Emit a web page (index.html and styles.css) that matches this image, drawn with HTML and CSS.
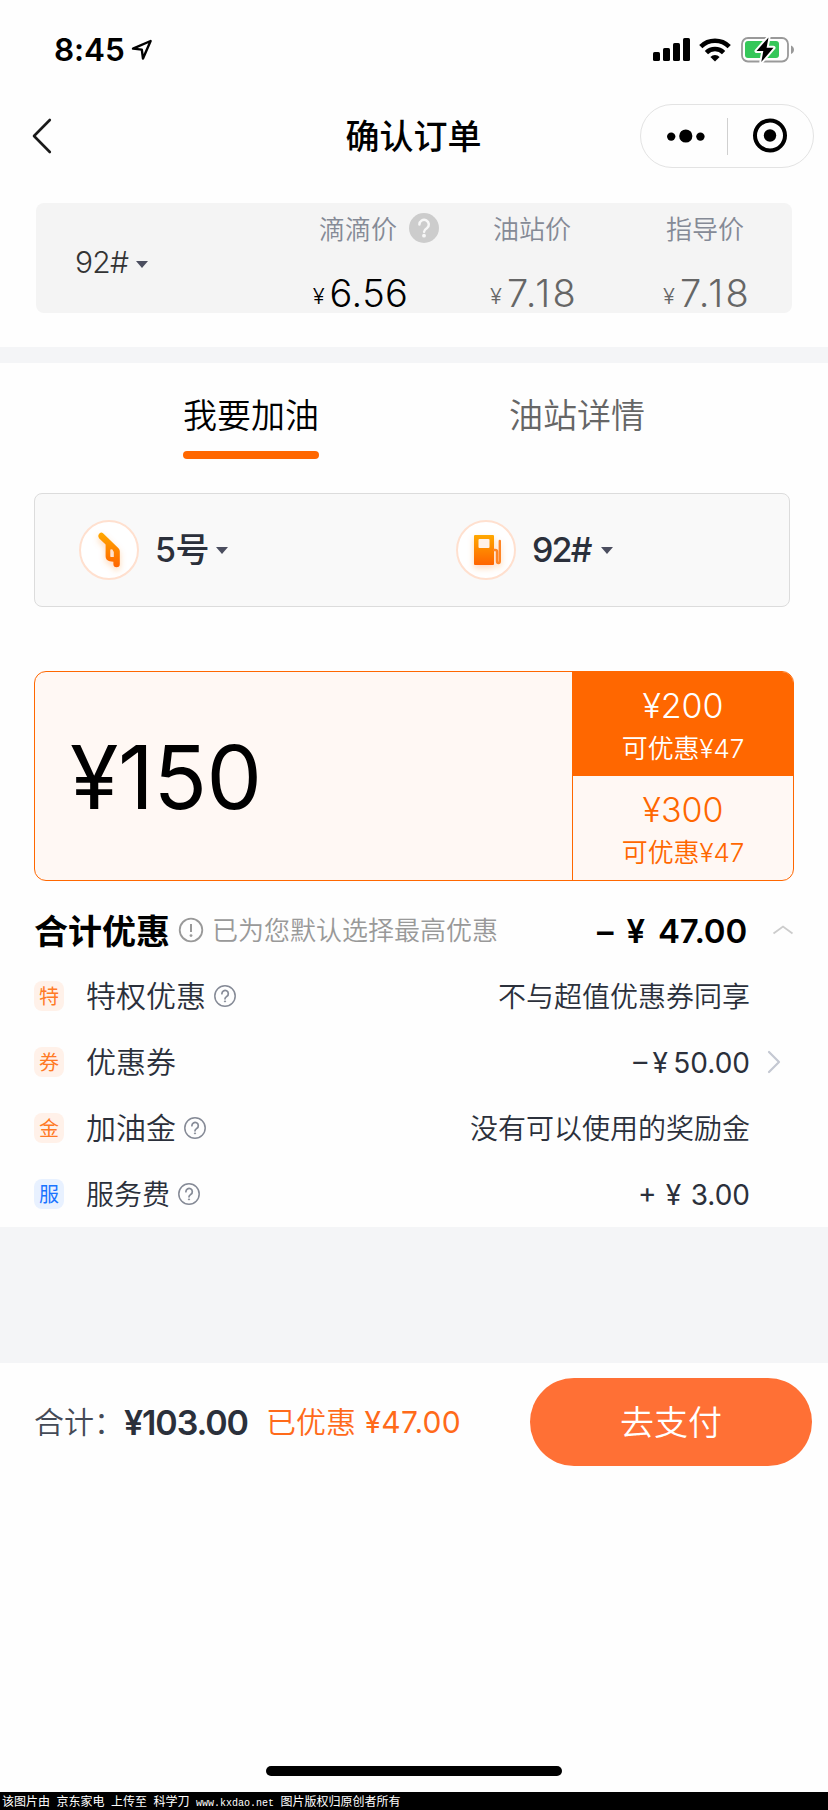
FILE: index.html
```html
<!DOCTYPE html>
<html lang="zh-CN">
<head>
<meta charset="utf-8">
<title>确认订单</title>
<link rel="stylesheet" href="styles.css">
</head>
<body>
<div class="page">
  <header class="status">
    <span class="time">8:45</span>
    <svg class="locate" width="22" height="22" viewBox="0 0 22 22"><path d="M2 9.600 19.600 2 12 19.600 10.800 10.600Z" fill="none" stroke="#000" stroke-width="2.400" stroke-linejoin="round"/></svg>
    <div class="status-icons">
      <svg width="37" height="24" viewBox="0 0 37 24"><rect x="0" y="14" width="7" height="9" rx="1.600"/><rect x="10" y="10" width="7" height="13" rx="1.600"/><rect x="20" y="5" width="7" height="18" rx="1.600"/><rect x="30" y="0" width="7" height="23" rx="1.600"/></svg>
      <svg class="wifi" width="32" height="24" viewBox="0 0 32 24"><g fill="none" stroke="#000" stroke-width="4.600"><path d="M1.800 8.600a20.200 20.200 0 0 1 28.400 0"/><path d="M7.400 14.600a12.200 12.200 0 0 1 17.200 0"/></g><path d="M16 23.600 11.400 19a6.500 6.500 0 0 1 9.200 0Z"/></svg>
      <svg class="battery" width="54" height="28" viewBox="0 0 54 28"><rect x="1" y="2" width="46" height="23.500" rx="6" fill="none" stroke="#999" stroke-width="1.800"/><path d="M50 9.500c4 1.200 4 7.300 0 8.500Z" fill="#999"/><rect x="4" y="5" width="34" height="17" rx="3" fill="#35c759"/><path d="M27.500 1.500 15.500 15h6.800L20.300 26 32.500 11.800h-6.900Z" fill="#000" stroke="#fefefe" stroke-width="4" stroke-linejoin="round" paint-order="stroke"/></svg>
    </div>
  </header>

  <nav class="nav">
    <svg class="back" width="20" height="36" viewBox="0 0 20 36"><path d="M17.800 2 2 18 17.800 34" fill="none" stroke="#1a1a1a" stroke-width="2.600" stroke-linecap="round" stroke-linejoin="round"/></svg>
    <h1 class="title">确认订单</h1>
    <div class="capsule">
      <svg width="38" height="14" viewBox="0 0 38 14"><circle cx="4.200" cy="7.600" r="4.200"/><circle cx="18.800" cy="7" r="6.600"/><circle cx="33.400" cy="7.600" r="4.200"/></svg>
      <span class="capsule-line"></span>
      <svg width="36" height="36" viewBox="0 0 36 36"><circle cx="18" cy="17.500" r="15" fill="none" stroke="#000" stroke-width="4"/><circle cx="18" cy="17.500" r="6.200"/></svg>
    </div>
  </nav>

  <section class="prices">
    <div class="price-card">
      <div class="grade">92#<i class="caret"></i></div>
      <div class="price main">
        <div class="price-label">滴滴价<span class="help-solid"><svg width="30" height="30" viewBox="0 0 30 30"><circle cx="15" cy="15" r="15" fill="#ccc"/><path d="M10.400 11.500a4.700 4.700 0 1 1 7.400 3.800c-1.800 1.200-2.700 1.900-2.700 3.500" fill="none" stroke="#f7f7f7" stroke-width="2.500" stroke-linecap="round"/><circle cx="15" cy="22.700" r="1.900" fill="#f7f7f7"/></svg></span></div>
        <div class="price-value"><small>¥</small>6.56</div>
      </div>
      <div class="price">
        <div class="price-label">油站价</div>
        <div class="price-value"><small>¥</small>7.18</div>
      </div>
      <div class="price">
        <div class="price-label">指导价</div>
        <div class="price-value"><small>¥</small>7.18</div>
      </div>
    </div>
  </section>

  <div class="tabs">
    <div class="tab active">我要加油</div>
    <div class="tab">油站详情</div>
  </div>

  <div class="selector">
    <div class="select">
      <svg class="ring" width="60" height="60" viewBox="0 0 60 60">
        <defs>
          <linearGradient id="flame" x1="0" y1="0" x2="0" y2="1"><stop offset="0" stop-color="#ffa800"/><stop offset="1" stop-color="#ff6400"/></linearGradient>
          <filter id="glow" x="-50%" y="-50%" width="200%" height="200%"><feDropShadow dx="0" dy="3" stdDeviation="3" flood-color="#ff7a20" flood-opacity=".3"/></filter>
        </defs>
        <circle cx="30" cy="30" r="29" fill="#fff" stroke="#ffe0cf" stroke-width="2"/>
        <path d="M19.800 14.200a3.200 3.200 0 0 1 4.500-.8L39.500 28.300q1.300 1.300 1.300 3V44a3.200 3.200 0 0 1-6.400 0v-2.300l-3.800-.4q-4-1-4-5V24.500L20 18.200a3.200 3.200 0 0 1-.2-4ZM31.300 29.600v6.300q0 1.200 1.200 1.200h2.300v-5.200l-1.600-2.600Z" fill="url(#flame)" fill-rule="evenodd" filter="url(#glow)"/>
      </svg>
      <span class="select-text">5号</span><i class="caret"></i>
    </div>
    <div class="select">
      <svg class="ring" width="60" height="60" viewBox="0 0 60 60">
        <circle cx="30" cy="30" r="29" fill="#fff" stroke="#ffe0cf" stroke-width="2"/>
        <g filter="url(#glow)"><path d="M19 15h18q1 0 1 1v28q0 1-1 1H19q-1 0-1-1V16q0-1 1-1Z" fill="url(#flame)"/><path d="M38 30h1.500q1.500 0 1.500 1.500V41q0 2 1.400 2t1.400-2V21" fill="none" stroke="#ff8526" stroke-width="2.400" stroke-linecap="round"/></g>
        <rect x="22.500" y="19" width="11" height="9" rx="1" fill="#fff1e8"/>
      </svg>
      <span class="select-text tight">92#</span><i class="caret"></i>
    </div>
  </div>

  <div class="amount">
    <div class="amount-main">¥150</div>
    <div class="amount-side">
      <div class="choice on"><b>¥200</b><span>可优惠¥47</span></div>
      <div class="choice"><b>¥300</b><span>可优惠¥47</span></div>
    </div>
  </div>

  <div class="total">
    <strong class="total-name">合计优惠</strong>
    <svg class="info" width="26" height="26" viewBox="0 0 26 26"><circle cx="13" cy="13" r="11.300" fill="none" stroke="#999" stroke-width="1.800"/><path d="M13 7v8" stroke="#999" stroke-width="2"/><circle cx="13" cy="18.600" r="1.400" fill="#999"/></svg>
    <span class="total-note">已为您默认选择最高优惠</span>
    <span class="total-value">– ¥ 47.00</span>
    <svg class="up" width="22" height="10" viewBox="0 0 22 10"><path d="M1.500 8.500 11 1.500l9.500 7" fill="none" stroke="#ccc" stroke-width="1.800"/></svg>
  </div>

  <div class="rows">
    <div class="row"><span class="badge">特</span><span class="name">特权优惠</span>
      <svg class="help" width="24" height="24" viewBox="0 0 24 24"><g id="help" fill="none" stroke="#858a96"><circle cx="12" cy="12" r="10.200" stroke-width="1.500"/><path d="M8.900 9.700a3.200 3.200 0 1 1 5 2.600c-1.300.9-1.900 1.300-1.900 2.500" stroke-width="1.700" stroke-linecap="round"/><circle cx="12" cy="17.400" r=".6" fill="#858a96" stroke-width="1"/></g></svg>
      <span class="value">不与超值优惠券同享</span></div>
    <div class="row"><span class="badge">券</span><span class="name">优惠券</span>
      <span class="value coupon">– ¥ 50.00</span>
      <svg class="go" width="14" height="24" viewBox="0 0 14 24"><path d="M2 2 12 12 2 22" fill="none" stroke="#c4c8d2" stroke-width="2.200" stroke-linecap="round" stroke-linejoin="round"/></svg></div>
    <div class="row"><span class="badge">金</span><span class="name">加油金</span>
      <svg class="help" width="24" height="24" viewBox="0 0 24 24"><use href="#help"/></svg>
      <span class="value">没有可以使用的奖励金</span></div>
    <div class="row"><span class="badge blue">服</span><span class="name small">服务费</span>
      <svg class="help" width="24" height="24" viewBox="0 0 24 24"><use href="#help"/></svg>
      <span class="value fee">+ ¥ 3.00</span></div>
  </div>

  <div class="spacer"></div>

  <div class="checkout">
    <span class="sum-label">合计：</span>
    <span class="sum">¥103.00</span>
    <span class="saved">已优惠 <span class="saved-num">¥47.00</span></span>
    <button class="pay">去支付</button>
  </div>

  <div class="home"></div>
  <footer class="credit">该图片由 京东家电 上传至 科学刀 <span class="url">www.kxdao.net</span> 图片版权归原创者所有</footer>
</div>
</body>
</html>
```

FILE: styles.css
```css
* { box-sizing: border-box; }
body { margin: 0; background: #fefefe; }
svg { display: block; flex: none; }
.page {
  width: 828px; height: 1810px; overflow: hidden;
  display: flex; flex-direction: column;
  font-family: Inter, "Noto Sans CJK SC", sans-serif;
  color: #2b303b; white-space: nowrap;
}
.page > * { flex: none; }

.status { height: 99px; padding: 1px 33px 0 54px; display: flex; align-items: center; }
.time { width: 77px; font-size: 31.5px; line-height: 40px; font-weight: 600; letter-spacing: -.1px; color: #000; }
.status-icons { margin-left: auto; display: flex; align-items: center; }
.wifi { margin-left: 9px; }
.battery { margin-left: 10px; }

.nav { height: 74px; padding: 0 14px 0 32px; display: flex; align-items: center; justify-content: space-between; }
.back { margin-right: 135px; }
.title { margin: 2px 0 0; font-size: 34px; line-height: 44px; font-weight: 500; color: #000; }
.capsule { width: 174px; height: 64px; border: 1px solid #e3e3e3; border-radius: 32px; padding: 0 25px 0 26px; display: flex; align-items: center; justify-content: space-between; }
.capsule-line { width: 1px; height: 37px; background: #d0d0d0; margin-right: 3px; }

.prices { height: 190px; padding: 30px 36px 0; border-bottom: 16px solid #f4f5f7; }
.price-card { height: 110px; border-radius: 8px; background: #f4f4f4; display: grid; grid-template-columns: 237px repeat(3, 173px); }
.grade { padding-left: 39px; margin-top: 7px; display: flex; align-items: center; font-size: 30px; font-weight: 350; letter-spacing: -.7px; line-height: 40px; color: #333; }
.caret { border: 6px solid transparent; border-top: 7px solid #4b4e5f; border-bottom: 0; margin-left: 8px; }
.grade .caret { margin-top: 6px; }
.price { padding-top: 7px; display: flex; flex-direction: column; align-items: center; color: #666; }
.price-label { display: flex; align-items: center; font-size: 26px; line-height: 40px; font-weight: 350; color: #858a96; margin-right: 1px; }
.help-solid { width: 30px; margin: -5px -42px 0 12px; }
.price-value { margin-top: 23px; font-size: 38px; line-height: 40px; font-weight: 350; letter-spacing: 2.2px; margin-left: 3px; }
.price-value small { font-size: 22px; letter-spacing: 0; margin-right: 5px; vertical-align: 3px; line-height: 20px; }
.price.main .price-label { margin-right: 3px; }
.price.main .price-value { color: #000; font-weight: 350; letter-spacing: .4px; margin-left: 2px; }

.tabs { padding: 32px 0 0 183px; display: flex; gap: 190px; font-size: 34px; line-height: 40px; font-weight: 350; color: #666; }
.tab { width: 136px; padding-top: 1px; }
.tab::after { content: ""; display: block; height: 8px; border-radius: 4px; margin-top: 15px; }
.active { color: #000; }
.active::after { background: #ff6700; }

.selector { margin: 34px 38px 0 34px; height: 114px; border: 1px solid #dcdcdc; border-radius: 8px; background: #f9f9f9; padding-left: 44px; display: grid; grid-template-columns: 377px 1fr; }
.select { display: flex; align-items: center; }
.select-text { margin-left: 16px; font-size: 34px; line-height: 44px; font-weight: 500; letter-spacing: -.5px; }
.select-text.tight { letter-spacing: -1.8px; }
.select .caret { margin-left: 7px; }
.select .tight + .caret { margin-left: 10px; }

.amount { margin: 64px 34px 0; height: 210px; border: 1px solid #ff6700; border-radius: 12px; overflow: hidden; background: #fff8f4; display: grid; grid-template-columns: 1fr 221px; }
.amount-main { padding-left: 35px; font-size: 88px; line-height: 210px; letter-spacing: -.4px; color: #000; }
.amount-side { border-left: 1px solid #ff6700; border-bottom: 1px solid #ff6700; display: grid; grid-template-rows: 104px 1fr; }
.choice { padding-top: 13px; text-align: center; color: #ff6700; font-size: 26px; font-weight: 350; line-height: 42px; }
.choice b { display: block; font-size: 34px; line-height: 42px; font-weight: 350; }
.choice span { display: block; padding-top: 1px; letter-spacing: -.1px; }
.choice.on { background: #ff6700; color: #fff; }

.total { height: 82px; padding: 18px 34px 0; display: flex; align-items: center; }
.total-name { padding-top: 1px; font-size: 34px; line-height: 44px; font-weight: 700; color: #000; }
.info { margin: -2px 0 0 8px; }
.total-note { margin-left: 8px; font-size: 26px; line-height: 40px; font-weight: 350; color: #999; }
.total-value { margin-left: auto; font-size: 33px; line-height: 44px; font-weight: 600; word-spacing: 5px; letter-spacing: -.2px; color: #000; }
.up { margin: -2px 0 0 25px; }

.row { height: 66px; padding: 0 47px 0 34px; display: flex; align-items: center; }
.badge { width: 30px; height: 30px; border-radius: 8px; background: #fff1e9; color: #ff7a26; font-size: 20px; line-height: 32px; text-align: center; }
.badge.blue { background: #e8f1ff; color: #1a74ff; }
.name { margin-left: 22px; font-size: 30px; line-height: 40px; font-weight: 350; }
.name.small { font-size: 28px; padding-top: 1px; }
.help { margin-left: 7px; }
.value { margin-left: auto; margin-right: 31px; padding-top: 2px; font-size: 28px; line-height: 40px; font-weight: 350; }
.coupon { word-spacing: -2.5px; font-weight: 400; }
.fee { word-spacing: 1.5px; font-weight: 400; }
.go { margin-left: -14px; }

.spacer { height: 136px; background: #f4f5f7; }

.checkout { height: 118px; padding: 0 16px 0 34px; display: flex; align-items: center; }
.sum-label { width: 90px; font-size: 30px; font-weight: 350; line-height: 40px; color: #444a56; }
.sum { width: 142px; padding-top: 2px; font-size: 34px; line-height: 40px; font-weight: 600; letter-spacing: -1.1px; }
.saved { font-size: 30px; line-height: 40px; font-weight: 350; color: #ff6a1a; }
.saved-num { font-weight: 400; letter-spacing: .3px; }
.pay { margin-left: auto; width: 282px; height: 88px; padding: 1px 0 0; border: 0; border-radius: 44px; background: #ff7035; color: #fff; font: 350 34px/88px Inter, "Noto Sans CJK SC", sans-serif; }

.home { width: 296px; height: 10px; border-radius: 5px; background: #000; margin: auto auto 16px; }
.credit { height: 18px; padding-left: 2px; background: #000; color: #fff; font: 12px/17px "Noto Sans CJK SC", sans-serif; word-spacing: 3.8px; }
.url { font-family: "Liberation Mono", monospace; font-size: 10px; }
```
